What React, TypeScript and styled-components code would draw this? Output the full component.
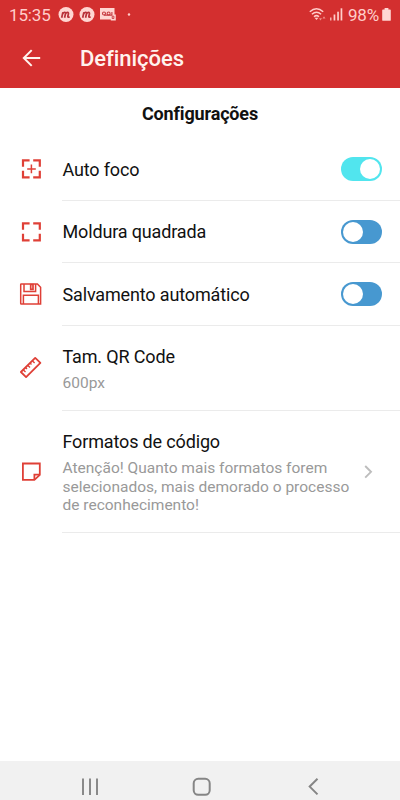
import React from 'react';
import styled, { createGlobalStyle } from 'styled-components';

const GlobalStyle = createGlobalStyle`
  * { box-sizing: border-box; }
  body { margin: 0; background: #fff; font-family: Roboto, "Liberation Sans", sans-serif; }
`;

const Screen = styled.div`
  width: 400px;
  height: 800px;
  display: flex;
  flex-direction: column;
  overflow: hidden;
  background: #fff;
  color: #111;
`;

const StatusBar = styled.div`
  height: 29px;
  flex: none;
  display: flex;
  align-items: center;
  padding: 0 9px;
  background: #d32f2f;
  color: #ffcdca;
  svg { display: block; flex: none; }
`;

const StatusText = styled.span`
  font-size: 17px;
  line-height: 20px;
  letter-spacing: -0.15px;
  white-space: nowrap;
`;

const StatusIcons = styled.div`
  display: flex;
  align-items: center;
  gap: 5px;
  margin-left: 7px;
  flex: 1;
`;

const StatusEnd = styled.div`
  display: flex;
  align-items: center;
`;

const SignalCell = styled.span`
  margin: 0 5px 0 3px;
`;

const BatteryCell = styled.span`
  margin-left: 3px;
`;

const AppBar = styled.header`
  height: 59px;
  flex: none;
  display: flex;
  align-items: center;
  padding-left: 22px;
  background: #d32f2f;
  color: #fff3ee;
  svg { display: block; margin-top: -2px; }
`;

const AppTitle = styled.h1`
  margin: 0 0 0 39px;
  font-size: 22px;
  line-height: 28px;
  font-weight: 500;
  letter-spacing: -0.05px;
`;

const Content = styled.main`
  flex: 1;
`;

const SectionTitle = styled.h2`
  margin: 0;
  height: 50px;
  padding-top: 14px;
  text-align: center;
  font-size: 18px;
  line-height: 24px;
  font-weight: 700;
  letter-spacing: -0.15px;
`;

const Row = styled.div<{ $height: number }>`
  display: flex;
  height: ${p => p.$height}px;
`;

const IconCell = styled.div`
  width: 62px;
  display: flex;
  align-items: center;
  padding-left: 19px;
  color: #df4037;
  svg { display: block; }
`;

const RowBody = styled.div`
  flex: 1;
  display: flex;
  align-items: center;
  justify-content: space-between;
  padding: 1px 18px 0 0.5px;
  border-bottom: 1px solid #ebebeb;
`;

const Label = styled.div`
  padding-top: 1px;
  font-size: 18px;
  line-height: 24px;
  letter-spacing: -0.15px;
  white-space: nowrap;
`;

const Hint = styled.div`
  margin-top: 5px;
  font-size: 15.5px;
  line-height: 18.3px;
  color: #999;
  white-space: nowrap;
`;

const Toggle = styled.button<{ $on?: boolean }>`
  width: 41px;
  height: 24px;
  padding: 2px;
  border: 0;
  border-radius: 12px;
  display: flex;
  align-items: center;
  justify-content: ${p => (p.$on ? 'flex-end' : 'flex-start')};
  background: ${p => (p.$on ? '#51e5ee' : '#4798d0')};
`;

const Knob = styled.span`
  width: 20px;
  height: 20px;
  border-radius: 50%;
  background: #fff;
`;

const ChevronCell = styled.div`
  padding-right: 9px;
  svg { display: block; }
`;

const NavBar = styled.nav`
  height: 39px;
  flex: none;
  display: flex;
  justify-content: space-between;
  padding: 16px 81px 0 81px;
  background: #f1f1f1;
`;

const NotificationDot = () => (
  <svg width="16" height="16" viewBox="0 0 16 16">
    <circle cx="8" cy="7.5" r="7.5" fill="#ffd6d2" />
    <path d="M3.7 10.8 4.9 5.2M4.8 6.8C6 4.5 7.9 5 7.4 7L6.6 10.8M7.4 7C8.8 4.6 10.9 4.9 10.4 7L9.8 9.3Q9.6 10.6 11.6 9.9" fill="none" stroke="#b9323a" strokeWidth="1.7" />
  </svg>
);

const VoicemailIcon = () => (
  <svg width="17" height="16" viewBox="0 0 17 16">
    <path d="M0 1H14.5V7.5H15.8V13.4H10.8V12.5H0Z" fill="#ffd6d2" />
    <g fill="none" stroke="#c63b40" strokeWidth="1.1">
      <circle cx="4" cy="6.5" r="1.5" />
      <circle cx="8.6" cy="6.5" r="1.5" />
      <path d="M4 8.1H11.9V5" />
      <path d="M12.2 9.2H13.9V11.5H12.2Z" strokeWidth=".9" />
    </g>
  </svg>
);

const DotIcon = () => (
  <svg width="14" height="4" viewBox="0 0 14 4">
    <circle cx="7" cy="1.5" r="1.2" fill="#ffcdca" />
  </svg>
);

const WifiIcon = () => (
  <svg width="18" height="16" viewBox="0 0 18 16">
    <g fill="none" stroke="#ffcdca" strokeWidth="1.5">
      <path d="M.8 4.8Q7.5-1.3 14.2 4.8" />
      <path d="M2.9 7.3Q7.5 3.2 12.1 7.3" />
      <path d="M5 9.7Q7.5 7.5 10 9.7" />
    </g>
    <path d="M5.5 10.8H9.5L7.5 13.1Z" fill="#ffcdca" />
    <path d="M10 11.2H13L11.5 13.6ZM13.5 11.6 15 9.3 16.5 11.6Z" fill="#ef8f8b" />
  </svg>
);

const SignalIcon = () => (
  <svg width="13" height="14" viewBox="0 0 13 14" fill="#ffcdca">
    <rect x="0" y="9.5" width="1.5" height="3" opacity=".8" />
    <rect x="3.6" y="6.5" width="1.7" height="6" />
    <rect x="7.2" y="3.7" width="1.7" height="8.8" />
    <rect x="10.6" y=".3" width="1.7" height="12.2" />
  </svg>
);

const BatteryIcon = () => (
  <svg width="9" height="14" viewBox="0 0 9 14">
    <path d="M2.6 0H6.4V1.5H8Q8.8 1.5 8.8 2.3V11.9Q8.8 12.8 8 12.8H1Q.2 12.8.2 11.9V2.3Q.2 1.5 1 1.5H2.6Z" fill="#ffd6d2" />
  </svg>
);

const BackArrow = () => (
  <svg width="19" height="18" viewBox="0 0 19 18" fill="none" stroke="currentColor" strokeWidth="2">
    <path d="M18.2 9H2M9.7 1.1 1.8 9 9.7 16.9" />
  </svg>
);

const FrameIcon = ({ plus = false }: { plus?: boolean }) => (
  <svg width="24" height="24" viewBox="0 0 24 24" fill="none" stroke="currentColor">
    <path d="M10.6 3.4H4V9.8M14.2 3.4H20.8V9.8M4 13.8V20.4H10.6M20.8 13.8V20.4H14.2" strokeWidth="2.2" />
    {plus && <path d="M12.4 7.6V16.2M8.2 11.9H16.8" strokeWidth="1.5" />}
  </svg>
);

const SaveIcon = () => (
  <svg width="24" height="24" viewBox="0 0 24 24" fill="none" stroke="currentColor" strokeWidth="1.5">
    <path d="M2.2 2H18.4L21.6 5.3V22H2.2Q1.7 22 1.7 21.5V2.5Q1.7 2 2.2 2Z" />
    <path d="M5 2V9.4H16.6V2M4.4 22V13.2H19.4V22" />
    <path d="M11.7 2.5V7.3H14V2.5Z" strokeWidth="1.7" />
  </svg>
);

const RulerIcon = () => (
  <svg width="24" height="24" viewBox="0 0 24 24" fill="none" stroke="currentColor" strokeWidth="1.8" strokeLinejoin="round">
    <path d="M1.9 16 16.2 1.9 21.4 6.9 7.1 21.1Z" />
    <path d="M4.2 13.8 6.5 16M6.5 11.5 8 13M8.7 9.2 11 11.4M11 6.9 12.5 8.4M13.3 4.7 15.6 6.9" strokeWidth="1.4" />
  </svg>
);

const NoteIcon = () => (
  <svg width="24" height="24" viewBox="0 0 24 24" fill="none" stroke="currentColor" strokeWidth="1.8">
    <path d="M3.9 3.5H20.8V14.8L15.4 19.9H3.9Z" />
    <path d="M15.4 19.6V14.7H20.6" />
  </svg>
);

const Chevron = () => (
  <svg width="9" height="14" viewBox="0 0 9 14" fill="none" stroke="#bdbdbd" strokeWidth="1.9">
    <path d="M1.2 1 7 6.8 1.2 12.6" />
  </svg>
);

const RecentsIcon = () => (
  <svg width="18" height="19" viewBox="0 0 18 19" stroke="#858585" strokeWidth="1.9">
    <path d="M2 1.5V18M9 1.5V18M16 1.5V18" />
  </svg>
);

const HomeIcon = () => (
  <svg width="23" height="19" viewBox="0 0 23 19" fill="none" stroke="#858585" strokeWidth="2">
    <rect x="1.7" y="1.8" width="16" height="16" rx="4.5" />
  </svg>
);

const NavBackIcon = () => (
  <svg width="11" height="19" viewBox="0 0 11 19" fill="none" stroke="#858585" strokeWidth="2">
    <path d="M9.5 1.8 1.7 9.6 9.5 17.4" />
  </svg>
);

export default function App() {
  return (
    <Screen>
      <GlobalStyle />
      <StatusBar>
        <StatusText>15:35</StatusText>
        <StatusIcons>
          <NotificationDot />
          <NotificationDot />
          <VoicemailIcon />
          <DotIcon />
        </StatusIcons>
        <StatusEnd>
          <WifiIcon />
          <SignalCell><SignalIcon /></SignalCell>
          <StatusText>98%</StatusText>
          <BatteryCell><BatteryIcon /></BatteryCell>
        </StatusEnd>
      </StatusBar>
      <AppBar>
        <BackArrow />
        <AppTitle>Definições</AppTitle>
      </AppBar>
      <Content>
        <SectionTitle>Configurações</SectionTitle>
        <Row $height={62.5}>
          <IconCell><FrameIcon plus /></IconCell>
          <RowBody><Label>Auto foco</Label><Toggle $on aria-label="Auto foco"><Knob /></Toggle></RowBody>
        </Row>
        <Row $height={62.5}>
          <IconCell><FrameIcon /></IconCell>
          <RowBody><Label>Moldura quadrada</Label><Toggle aria-label="Moldura quadrada"><Knob /></Toggle></RowBody>
        </Row>
        <Row $height={62.5}>
          <IconCell><SaveIcon /></IconCell>
          <RowBody><Label>Salvamento automático</Label><Toggle aria-label="Salvamento automático"><Knob /></Toggle></RowBody>
        </Row>
        <Row $height={85.5}>
          <IconCell><RulerIcon /></IconCell>
          <RowBody><div><Label>Tam. QR Code</Label><Hint>600px</Hint></div></RowBody>
        </Row>
        <Row $height={121.5}>
          <IconCell><NoteIcon /></IconCell>
          <RowBody>
            <div>
              <Label>Formatos de código</Label>
              <Hint>Atenção! Quanto mais formatos forem<br />selecionados, mais demorado o processo<br />de reconhecimento!</Hint>
            </div>
            <ChevronCell><Chevron /></ChevronCell>
          </RowBody>
        </Row>
      </Content>
      <NavBar>
        <RecentsIcon />
        <HomeIcon />
        <NavBackIcon />
      </NavBar>
    </Screen>
  );
}
